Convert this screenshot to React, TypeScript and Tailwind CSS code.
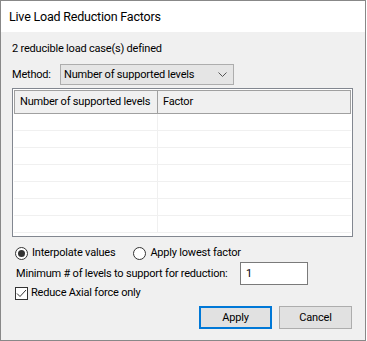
const font = "font-['Roboto','Liberation_Sans',sans-serif] tracking-[-0.2px]";

function Radio({ checked, label }: { checked?: boolean; label: string }) {
  return (
    <label className="flex h-[16px] items-center">
      <span className="flex h-[13px] w-[13px] items-center justify-center rounded-full border border-[#333] bg-white">
        {checked ? <span className="h-[7px] w-[7px] rounded-full bg-[#333]" /> : null}
      </span>
      <span className="ml-[4px]">{label}</span>
    </label>
  );
}

export default function App() {
  const rows = Array.from({ length: 7 });
  return (
    <div className={`${font} h-[341px] w-[367px] bg-white text-[11px] leading-[16px] text-black`}>
      <div className="flex h-[341px] w-[366px] flex-col border border-[#888] bg-[#f0f0f0]">
        <div className="flex h-[31px] shrink-0 items-center bg-white pl-[8px] text-[12.5px]">Live Load Reduction Factors</div>

        <div className="flex flex-col pl-[11px] pr-[13px] pt-[9px]">
          <p className="h-[16px]">2 reducible load case(s) defined</p>

          <div className="mt-[7px] flex h-[21px] items-center">
            <span className="w-[48px]">Method:</span>
            <div className="flex h-[21px] w-[174px] items-center justify-between border border-[#adadad] bg-[#e5e5e5] pl-[3px] pr-[6px]">
              <span>Number of supported levels</span>
              <svg width="9" height="5" viewBox="0 0 9 5" fill="none">
                <path d="M0.5 0.5 L4.5 4.5 L8.5 0.5" stroke="#555" strokeWidth="1" />
              </svg>
            </div>
          </div>

          <div className="mt-[3px] h-[149px] w-[341px] border border-[#828790] bg-white p-[1px]">
            <div className="flex h-[24px] border border-[#a0a0a0] bg-[#f0f0f0]">
              <div className="flex w-[143px] items-center border-r border-[#a0a0a0] pl-[5px]">Number of supported levels</div>
              <div className="flex flex-1 items-center pl-[5px]">Factor</div>
            </div>
            <div className="flex flex-col">
              {rows.map((_, i) => (
                <div key={i} className="flex h-[17px] border-b border-[#f0f0f0]">
                  <div className="w-[144px] border-r border-[#f0f0f0]" />
                  <div className="flex-1" />
                </div>
              ))}
            </div>
          </div>

          <div className="mt-[8px] flex gap-[18px] pl-[3px]">
            <Radio checked label="Interpolate values" />
            <Radio label="Apply lowest factor" />
          </div>

          <div className="mt-[1px] flex h-[23px] items-center pl-[4px]">
            <span className="w-[224px]">Minimum # of levels to support for reduction:</span>
            <div className="flex h-[23px] w-[68px] items-center border border-[#7a7a7a] bg-white pl-[5px]">1</div>
          </div>

          <label className="flex h-[16px] items-center pl-[3px]">
            <span className="flex h-[13px] w-[13px] items-center justify-center border border-[#333] bg-white">
              <svg width="11" height="9" viewBox="0 0 11 9" fill="none">
                <path d="M1 4.5 L4 7.5 L10 1" stroke="#333" strokeWidth="1" />
              </svg>
            </span>
            <span className="ml-[3px]">Reduce Axial force only</span>
          </label>

          <div className="mt-[5px] flex justify-end gap-[7px]">
            <button className="h-[23px] w-[73px] border-2 border-[#0078d7] bg-[#e1e1e1]">Apply</button>
            <button className="h-[23px] w-[73px] border border-[#adadad] bg-[#e1e1e1]">Cancel</button>
          </div>
        </div>
      </div>
    </div>
  );
}
